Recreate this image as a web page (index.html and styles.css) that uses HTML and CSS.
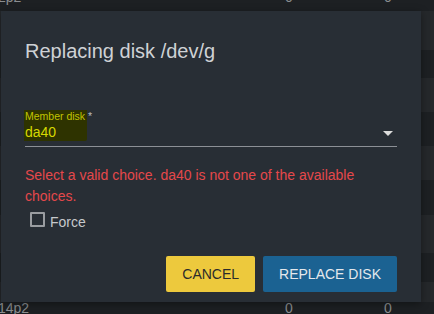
FILE: index.html
```html
<!DOCTYPE html>
<html lang="en">
<head>
<meta charset="UTF-8">
<meta name="viewport" content="width=device-width, initial-scale=1.0">
<title>Replace disk</title>
<link rel="stylesheet" href="styles.css">
</head>
<body>
<div class="table">
  <div class="row dark h28"><span>2p2</span><span>0</span><span>0</span></div>
  <div class="row light h39"></div>
  <div class="row dark h28"></div>
  <div class="row light h34"></div>
  <div class="row dark h34"></div>
  <div class="row light h34"></div>
  <div class="row dark h35"></div>
  <div class="row light h38"></div>
  <div class="row dark h29"></div>
  <div class="row light h20"></div>
  <div class="row dark h12 top"><span>14p2</span><span>0</span><span>0</span></div>
</div>

<div class="dialog">
  <h2 class="title">Replacing disk /dev/g</h2>
  <div class="field">
    <div class="mark"></div>
    <label class="label">Member disk <span class="req">*</span></label>
    <div class="select">
      <span class="value">da40</span>
      <span class="arrow"></span>
    </div>
  </div>
  <p class="error">Select a valid choice. da40 is not one of the available choices.</p>
  <div class="check">
    <span class="box"></span>
    <span>Force</span>
  </div>
  <div class="actions">
    <button class="btn cancel">CANCEL</button>
    <button class="btn primary">REPLACE DISK</button>
  </div>
</div>
</body>
</html>
```

FILE: styles.css
```css
html, body {
  margin: 0;
  height: 100%;
  overflow: hidden;
}
body {
  background: #1d2023;
  font-family: "Liberation Sans", Arial, sans-serif;
  position: relative;
}
.table {
  margin-top: -17px;
}
.row {
  display: grid;
  grid-template-columns: 285px 99px 1fr;
  align-items: center;
  overflow: hidden;
  color: #8a8d90;
  font-size: 14px;
}
.row span:first-child {
  margin-left: -2px;
}
.row.top {
  align-items: start;
  line-height: 12px;
}
.dark { background: #1d2023; }
.light { background: #25282b; }
.h12 { height: 12px; }
.h20 { height: 20px; }
.h28 { height: 28px; }
.h29 { height: 29px; }
.h34 { height: 34px; }
.h35 { height: 35px; }
.h38 { height: 38px; }
.h39 { height: 39px; }

.dialog {
  position: absolute;
  left: 1px;
  top: 11px;
  width: 420px;
  box-sizing: border-box;
  padding: 28px 24px 10px;
  background: #282e35;
  box-shadow: 0 2px 8px rgba(0, 0, 0, 0.4);
}
.title {
  margin: 0;
  font-size: 20px;
  font-weight: normal;
  line-height: 24px;
  color: #cfd2d5;
}
.field {
  position: relative;
  margin-top: 47px;
  border-bottom: 1px solid #8c9096;
}
.mark {
  position: absolute;
  left: -1px;
  top: 0;
  width: 63px;
  height: 31px;
  background: #2e3300;
  border-radius: 0 0 2px 0;
}
.label {
  position: relative;
  display: block;
  font-size: 10.5px;
  line-height: 12px;
  color: #c2c400;
}
.req {
  color: #b8bbbe;
}
.select {
  position: relative;
  display: flex;
  align-items: center;
  justify-content: space-between;
  height: 20px;
  padding-bottom: 4px;
}
.value {
  font-size: 14px;
  line-height: 20px;
  color: #d6d800;
}
.arrow {
  width: 0;
  height: 0;
  margin-right: 4px;
  margin-top: 2px;
  border-left: 5px solid transparent;
  border-right: 5px solid transparent;
  border-top: 5px solid #dcdcdc;
}
.error {
  margin: 18px 0 0;
  font-size: 14px;
  line-height: 21px;
  color: #e5484b;
}
.check {
  display: flex;
  align-items: baseline;
  gap: 5px;
  margin-top: 5px;
  margin-left: 5px;
  font-size: 14px;
  line-height: 20px;
  color: #c6c9cc;
}
.box {
  display: inline-block;
  width: 15px;
  height: 15px;
  box-sizing: border-box;
  border: 2px solid #9a9da1;
  border-radius: 1px;
}
.actions {
  display: flex;
  justify-content: flex-end;
  gap: 8px;
  margin-top: 24px;
}
.btn {
  height: 36px;
  padding: 0 16px;
  border: none;
  border-radius: 2px;
  font-family: "Liberation Sans", Arial, sans-serif;
  font-size: 14px;
}
.cancel {
  background: #edc93d;
  color: #2b2b2b;
}
.primary {
  background: #1b6292;
  color: #e4e8ec;
}
```
